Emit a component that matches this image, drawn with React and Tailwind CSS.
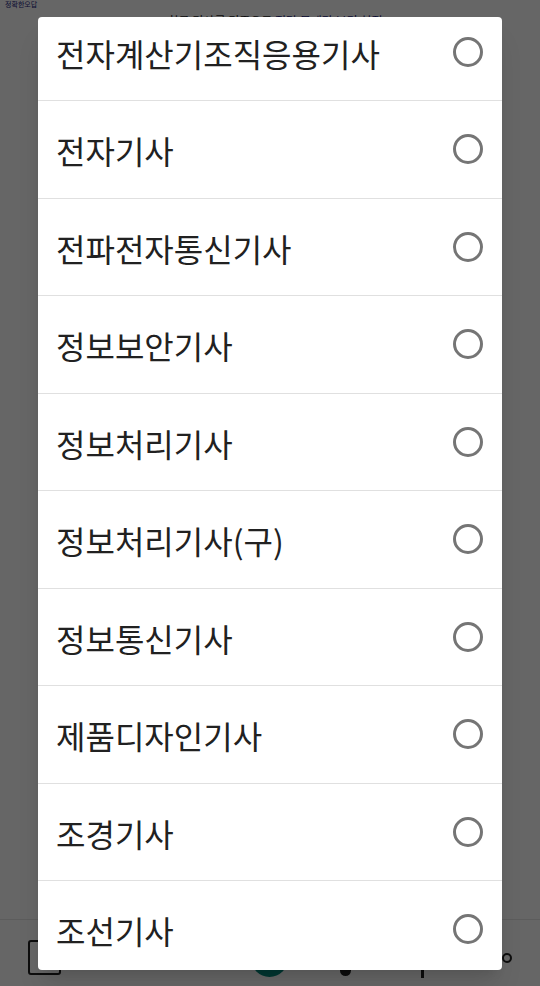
import React from 'react'

const items = [
    '전자계산기조직응용기사',
    '전자기사',
    '전파전자통신기사',
    '정보보안기사',
    '정보처리기사',
    '정보처리기사(구)',
    '정보통신기사',
    '제품디자인기사',
    '조경기사',
    '조선기사',
]

const font = { fontFamily: '"Noto Sans CJK KR", "Noto Sans", sans-serif' }

const App = () => {
    return (
        <div className="relative w-[540px] h-[986px] overflow-hidden bg-white flex flex-col" style={font}>
            {/* page underneath */}
            <p className="text-[7px] leading-[8px] text-[#1a237e] pl-[5px]">정확한오답</p>
            <p className="text-[12px] leading-[14px] text-center mt-[6px] pl-[10px]">
                <span className="text-[#222]">최근 기사를 기준으로 </span>
                <span className="text-[#1a237e]">정답 문제만 보기 설정</span>
            </p>
            <div className="flex-1" />
            <div className="h-[67px] border-t border-[#e6e6e6] flex items-start px-[28px] pt-[20px]">
                <div className="w-[34px] h-[35px] border-2 border-[#222] rounded-[3px]" />
                <div className="ml-[190px] w-[38px] h-[38px] rounded-full bg-[#00897b] -mt-[1px]" />
                <div className="ml-[52px] mt-[30px] w-[12px] h-[6px] rounded-b-full bg-[#222]" />
                <div className="ml-[70px] mt-[30px] w-[3px] h-[8px] bg-[#222]" />
                <div className="ml-[78px] mt-[13px] w-[10px] h-[10px] rounded-full border-2 border-[#222]" />
            </div>

            {/* dim overlay + dialog */}
            <div className="absolute inset-0 bg-black/60 pt-[17px] pl-[38px]">
                <div className="w-[464px] h-[953px] bg-white rounded-[4px] overflow-hidden shadow-xl">
                    <div className="-mt-[13.5px]">
                        {items.map((name) => (
                            <div
                                key={name}
                                className="h-[97.5px] flex items-center justify-between pl-[18px] pr-[19px] border-b border-[#e0e0e0]"
                            >
                                <span className="text-[32px] text-[#212121] leading-none pt-[2px]">{name}</span>
                                <span className="w-[30px] h-[30px] rounded-full border-[3px] border-[#757575]" />
                            </div>
                        ))}
                    </div>
                </div>
            </div>
        </div>
    )
}

export default App
